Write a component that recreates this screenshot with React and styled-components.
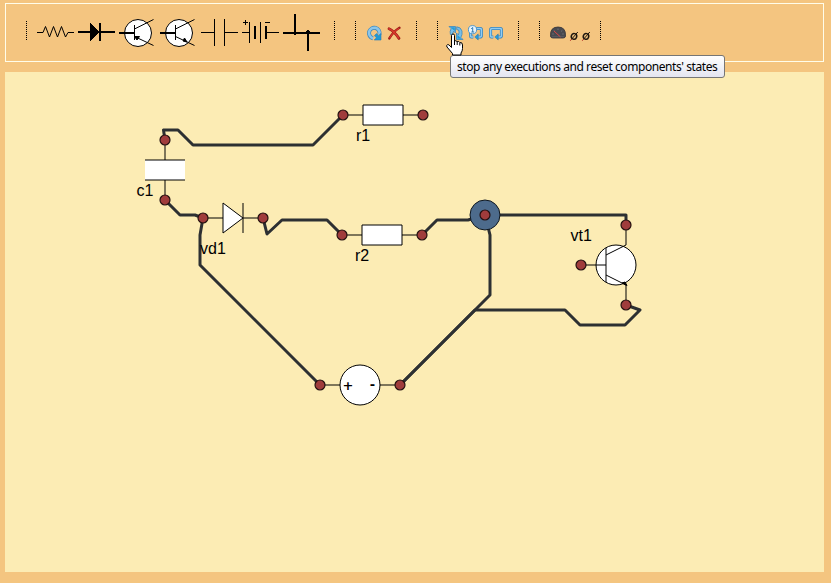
import React from "react";
import styled, { createGlobalStyle } from "styled-components";

const GlobalStyle = createGlobalStyle`
  * { box-sizing: border-box; }
  html, body { margin: 0; background: #f4c580; }
`;

const Page = styled.div`
  position: relative;
  width: 831px;
  height: 583px;
  padding: 3px 7px 11px 5px;
  background: #f4c580;
  display: flex;
  flex-direction: column;
  gap: 10px;
  overflow: hidden;
`;

const Toolbar = styled.div`
  flex: none;
  width: 819px;
  height: 59px;
  padding-left: 20px;
  border: 1px solid #fffdea;
  display: flex;
  align-items: center;
  gap: 20px;
`;

const Group = styled.div`
  display: flex;
  align-items: center;
  gap: 4px;
`;

const Divider = styled.div`
  width: 1px;
  height: 19px;
  margin: 0 ${(p) => p.$after ?? 0}px 4px ${(p) => p.$before ?? 0}px;
  background: repeating-linear-gradient(#000 0 1px, transparent 1px 2px);
`;

const Tool = styled.button`
  flex: none;
  width: ${(p) => p.$width}px;
  height: ${(p) => p.$height}px;
  padding: 0;
  border: 0;
  background: none;
  svg { display: block; width: 100%; height: 100%; overflow: visible; }
`;

const Canvas = styled.div`
  flex: none;
  width: 819px;
  height: 500px;
  background: #fcecb4;
`;

const Diagram = styled.svg`
  display: block;
  width: 819px;
  height: 500px;
`;

const Wire = styled.path`
  fill: none;
  stroke: #2d3032;
  stroke-width: 3;
  stroke-linejoin: round;
`;

const Lead = styled.path`
  fill: ${(p) => p.$fill || "none"};
  stroke: #000;
  stroke-width: 1;
`;

const Terminal = styled.circle`
  fill: #a03c3c;
  stroke: #241010;
  stroke-width: 1.2;
`;

const Label = styled.text`
  font: 16px "Liberation Sans", Arial, sans-serif;
  fill: #000;
`;

const Sign = styled.text`
  font: bold 13px "DejaVu Sans", Verdana, sans-serif;
  text-anchor: middle;
`;

const Tooltip = styled.div`
  position: absolute;
  left: 450px;
  top: 55px;
  width: 275px;
  height: 23px;
  padding-left: 6px;
  border: 1px solid #767676;
  border-radius: 3px;
  background: linear-gradient(#fff, #e4e5f0);
  font: 12px/22px "Noto Sans", "Open Sans", sans-serif;
  letter-spacing: -0.43px;
  white-space: nowrap;
  color: #000;
`;

const Pointer = styled.svg`
  position: absolute;
  left: 446px;
  top: 33px;
  width: 18px;
  height: 24px;
`;

const part = { fill: "none", stroke: "#000", strokeWidth: 1, shapeRendering: "crispEdges" };

const ResistorIcon = () => (
  <svg viewBox="0 0 37 37" {...part} shapeRendering="auto">
    <path d="M0 18.5H6L8.5 12.5L12.5 23L16.5 12.5L20.5 23L24.5 12.5L28.5 23L31 18.5H37" />
  </svg>
);

const DiodeIcon = () => (
  <svg viewBox="0 0 37 37" {...part}>
    <path d="M0 18H37" strokeWidth="2" />
    <path d="M12 8V27L21.5 18Z" fill="#000" stroke="none" />
    <path d="M22 9V27" strokeWidth="2" />
  </svg>
);

const TransistorIcon = ({ npn }) => (
  <svg viewBox="0 0 37 37" {...part} shapeRendering="auto">
    <circle cx="19" cy="19" r="13.5" fill="#fff" />
    <path d="M0 19H15" strokeWidth="2" />
    <path d="M15.5 11V26M15.5 15L34.5 5.5M15.5 22.5L34.5 31.5" />
    <path d={npn ? "M27 28L24.5 24L23 27Z" : "M15.5 22.5L20.5 22.5L18 26Z"} fill="#000" />
  </svg>
);

const CapacitorIcon = () => (
  <svg viewBox="0 0 37 37" {...part}>
    <path d="M0 18.5H13.5M13.5 5V32M23.5 5V32M23.5 18.5H37" />
  </svg>
);

const BatteryIcon = () => (
  <svg viewBox="0 0 37 37" {...part}>
    <path d="M0 18.5H7.5M7.5 8V29M18.5 8V29M24 18.5H37M1 8.5H6M3.5 6V11M23 8.5H28" />
    <path d="M13 12V25M24 12V25" strokeWidth="2" />
  </svg>
);

const JunctionIcon = () => (
  <svg viewBox="0 0 37 37" {...part}>
    <path d="M0 19H37M12 0V19M25 19V37" strokeWidth="2" />
    <path d="M11 17H13V18H14V20H13V21H11V20H10V18H11ZM24 16H26V17H27V20H26V21H24V20H23V17H24Z" fill="#000" stroke="none" />
  </svg>
);

const RotateIcon = () => (
  <svg viewBox="0 0 16 16" fill="none">
    <path d="M7 13.3A5.3 5.3 0 1 1 13.4 9.5" stroke="#3c86bb" strokeWidth="4" />
    <path d="M7.2 13.2A5.3 5.3 0 1 1 13.4 9.3" stroke="#8cc6ea" strokeWidth="2.6" />
    <path d="M15 8.5V15H8.2L10.4 12.8L8.4 10.6L10.6 8.6L12.7 10.7Z" fill="#1d9ad6" stroke="#2878b5" strokeWidth=".6" />
  </svg>
);

const DeleteIcon = () => (
  <svg viewBox="0 0 16 16" fill="none" strokeLinecap="round">
    <path d="M3 3.8C7 5.5 10 9 13 13.4" stroke="#9c1d17" strokeWidth="2.8" />
    <path d="M13.5 2.8C9.5 5 6 9 3.3 13.4" stroke="#9c1d17" strokeWidth="2.4" />
    <path d="M3 3.8C7 5.5 10 9 12.7 13" stroke="#d9382b" strokeWidth="1.5" />
    <path d="M12.8 3.5C9 5.7 6 9 3.8 12.7" stroke="#d9382b" strokeWidth="1.1" />
  </svg>
);

const ResetIcon = () => (
  <svg viewBox="0 0 16 16" strokeLinejoin="round">
    <g fill="#78bfe9" stroke="#3c86bb" strokeWidth=".8">
      <path d="M1 1.5H7.5V8L5.6 6.1Q4.3 8 5 11.5L2.4 9.5Q1.6 6.5 3.1 3.6Z" />
      <path d="M15 14.5H8.5V8L10.4 9.9Q11.7 7 10.6 5L8.7 4.6V1.8Q12.8 2 14 6Q14.6 9.5 12.9 12.4Z" />
    </g>
    <path d="M2.5 2.2H6.8V6.3Z M9.3 13.8V9.8L13.5 13.8Z" fill="#249dd9" />
  </svg>
);

const LoopIcon = ({ once }) => (
  <svg viewBox="0 0 16 16" fill="none" strokeLinejoin="round">
    <path d="M5.3 12H3.2Q2.6 12 2.6 11V4.6Q2.6 3.6 3.8 3.6H12.4Q13.4 3.6 13.4 4.8V10.7Q13.4 12 12 12H9.5" stroke="#3583bd" strokeWidth="3" />
    <path d="M5.3 12H3.2Q2.6 12 2.6 11V4.6Q2.6 3.6 3.8 3.6H12.4Q13.4 3.6 13.4 4.8V10.7Q13.4 12 12 12H9.5" stroke="#93cdf1" strokeWidth="1.5" />
    <path d="M10.2 8.9V15L6.8 12Z" fill="#249dd9" stroke="#2878b5" strokeWidth=".6" />
    {once && (
      <>
        <circle cx="4.5" cy="4.7" r="4.1" fill="#e7f3fb" stroke="#448fc5" strokeWidth=".9" />
        <path d="M3.2 3.8L4.7 2.5V7M3.3 7H6.2" stroke="#2878b5" />
      </>
    )}
  </svg>
);

const MeterIcon = () => (
  <svg viewBox="0 0 16 16" fill="none">
    <path d="M.5 11.5Q-.3 2 8 2T15.5 11.5Q15 13 13 13H3Q1 13 .5 11.5Z" fill="#484a50" stroke="#303036" strokeWidth=".8" />
    <path d="M2.5 9H3.5M3.8 5.5L4.6 6.2M8 3.7V4.7M12.2 5.5L11.4 6.2M13.5 9H12.5" stroke="#a0a0a6" strokeWidth=".7" />
    <path d="M4 6L10.5 12" stroke="#e04545" strokeWidth="1" />
    <path d="M2 11.8H14" stroke="#6b6d74" strokeWidth=".6" />
  </svg>
);

const ProbeIcon = () => (
  <svg viewBox="0 0 8 16" fill="none">
    <ellipse cx="4" cy="11.4" rx="2.7" ry="2.9" stroke="#1d160d" strokeWidth="1.5" transform="rotate(18 4 11.4)" />
    <path d="M.2 15.8L2 13.8" stroke="#b93b2d" />
    <path d="M1.6 14.2L7.8 7" stroke="#1d160d" />
  </svg>
);

const parts = [
  <ResistorIcon />, <DiodeIcon />, <TransistorIcon />, <TransistorIcon npn />,
  <CapacitorIcon />, <BatteryIcon />, <JunctionIcon />,
];
const runTools = [<ResetIcon />, <LoopIcon once />, <LoopIcon />];

const wires = [
  "M165 140L163.5 130H178L193 145H313L343 115",
  "M165 200L180 215H195L203 218",
  "M203 218L200 235V265L320 385",
  "M263 218L267 234L282 220H327L342 235",
  "M422 235L437 220H468L485 215",
  "M485 215H626V225",
  "M485 215L490 235V295L400 385",
  "M626 305L640 310L625 325H580L565 310H475L400 385",
];

const terminals = [
  [165, 140], [165, 200], [203, 218], [263, 218], [343, 115], [423, 115],
  [342, 235], [422, 235], [485, 215], [626, 225], [581, 265], [626, 305],
  [320, 385], [400, 385],
];

const labels = [
  ["c1", 136.5, 196], ["vd1", 200, 254], ["r1", 356, 141],
  ["r2", 355, 261], ["vt1", 570.5, 241],
];

const ToolGroup = ({ items, size }) => (
  <Group>
    <Divider $after={6} />
    {items.map((icon, i) => (
      <Tool key={i} $width={size} $height={size}>{icon}</Tool>
    ))}
    <Divider $before={10} />
  </Group>
);

export default function App() {
  return (
    <Page>
      <GlobalStyle />
      <Toolbar>
        <ToolGroup items={parts} size={37} />
        <ToolGroup items={[<RotateIcon />, <DeleteIcon />]} size={16} />
        <ToolGroup items={runTools} size={16} />
        <Group>
          <Divider $after={6} />
          <Tool $width={16} $height={16}><MeterIcon /></Tool>
          <Tool $width={8} $height={16}><ProbeIcon /></Tool>
          <Tool $width={8} $height={16}><ProbeIcon /></Tool>
          <Divider $before={6} />
        </Group>
      </Toolbar>
      <Canvas>
        <Diagram viewBox="5 72 819 500">
          {wires.map((d) => <Wire key={d} d={d} />)}
          <Lead d="M165 140V160M165 180V200" />
          <rect x="145" y="160" width="40" height="20" fill="#fff" />
          <Lead d="M145 160H185M145 180H185" />
          <Lead d="M203 218H223M243 218H263M243 203V233" />
          <Lead $fill="#fff" d="M223 203L243 218L223 233Z" />
          <Lead d="M343 115H363M403 115H423M342 235H362M402 235H422" />
          <Lead $fill="#fff" d="M363 105H403V125H363ZM362 225H402V245H362Z" />
          <circle cx="616" cy="265" r="20" fill="#fff" stroke="#000" />
          <Lead d="M581 265H606M606 248V282M606 255L626 245V225M606 275L626 285V305" />
          <Lead $fill="#000" d="M622 283L627 285.5L625 282Z" />
          <Lead d="M320 385H340M380 385H400" />
          <circle cx="360" cy="385" r="20" fill="#fff" stroke="#000" />
          <Sign x="348" y="389.5">+</Sign>
          <Sign x="372.5" y="389">-</Sign>
          <circle cx="485" cy="215" r="15" fill="#4d6b8c" stroke="#101820" />
          {terminals.map(([x, y]) => <Terminal key={`${x}-${y}`} cx={x} cy={y} r="5" />)}
          {labels.map(([name, x, y]) => <Label key={name} x={x} y={y}>{name}</Label>)}
        </Diagram>
      </Canvas>
      <Tooltip>stop any executions and reset components' states</Tooltip>
      <Pointer viewBox="0 0 18 24">
        <path
          d="M5.5 2.5Q5.5 1 7 1T8.5 2.5V8Q10 7 11 8.7Q13 7.8 13.7 9.5Q16.5 9 16.5 12V15.5Q16.5 18 15 20V22H6.5V20.5L1 14Q0 12.2 1.5 11.7T4 13L5.5 14.5Z"
          fill="#fff" stroke="#000" strokeWidth="1"
        />
        <path d="M8.5 8V12M11.2 9V12M13.8 10V12.5" stroke="#000" strokeWidth="1" />
      </Pointer>
    </Page>
  );
}
